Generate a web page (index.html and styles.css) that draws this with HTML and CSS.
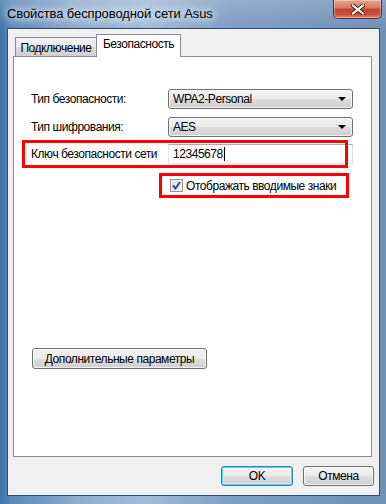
FILE: index.html
```html
<!DOCTYPE html>
<html lang="ru">
<head>
    <meta charset="UTF-8">
    <title>Свойства беспроводной сети Asus</title>
    <link rel="stylesheet" href="styles.css">
</head>
<body>
    <div class="window">
        <!-- Title bar -->
        <div class="titlebar">
            <span class="title">Свойства беспроводной сети Asus</span>
            <button class="close-btn" title="Закрыть">
                <svg width="14" height="11" viewBox="0 0 14 11">
                    <path d="M2 1.5 L12 9.5 M12 1.5 L2 9.5" stroke="#4a1a12" stroke-width="4" stroke-linecap="square"/>
                    <path d="M2 1.5 L12 9.5 M12 1.5 L2 9.5" stroke="#ffffff" stroke-width="2.2" stroke-linecap="square"/>
                </svg>
            </button>
        </div>

        <div class="client">
            <!-- Tabs -->
            <div class="tabs">
                <div class="tab">Подключение</div>
                <div class="tab active">Безопасность</div>
            </div>

            <div class="panel">
                <div class="row">
                    <label class="field-label">Тип безопасности:</label>
                    <div class="combo">WPA2-Personal<span class="arrow"></span></div>
                </div>
                <div class="row row-second">
                    <label class="field-label">Тип шифрования:</label>
                    <div class="combo">AES<span class="arrow"></span></div>
                </div>
                <div class="row row-key">
                    <label class="field-label">Ключ безопасности сети</label>
                    <div class="textbox">12345678<span class="caret"></span></div>
                </div>
                <div class="row row-check">
                    <span class="checkbox">
                        <svg width="9" height="9" viewBox="0 0 9 9">
                            <path d="M1 4.5 L3.5 7.5 L8 1" fill="none" stroke="#2b4f9e" stroke-width="2"/>
                        </svg>
                    </span>
                    <span class="check-label">Отображать вводимые знаки</span>
                </div>

                <button class="btn btn-advanced">Дополнительные параметры</button>

                <!-- annotation frames -->
                <div class="mark mark-key"></div>
                <div class="mark mark-check"></div>
            </div>

            <div class="footer">
                <button class="btn btn-ok">OK</button>
                <button class="btn btn-cancel">Отмена</button>
            </div>
        </div>
    </div>
</body>
</html>
```

FILE: styles.css
```css
/* Global */
* {
    box-sizing: border-box;
}

body {
    margin: 0;
    width: 386px;
    height: 504px;
    overflow: hidden;
    font-family: "Liberation Sans", Arial, sans-serif;
    font-size: 12px;
    letter-spacing: -0.45px;
    color: #000;
    white-space: nowrap;
}

/* Window frame */
.window {
    width: 386px;
    height: 504px;
    padding: 0 6px 8px 7px;
    display: flex;
    flex-direction: column;
    background:
        linear-gradient(180deg, rgba(255,255,255,0.18) 0, rgba(255,255,255,0) 28px),
        linear-gradient(90deg, #3f73ac 0, #5b88b8 3%, #8fadcd 20%, #a2bcd7 38%, #7d9dc2 60%, #7190b6 100%);
}

.titlebar {
    height: 28px;
    display: flex;
    align-items: flex-start;
    justify-content: space-between;
}

.title {
    margin-top: 6px;
    font-size: 13px;
    letter-spacing: -0.1px;
    line-height: 16px;
    text-shadow: 0 0 6px #e6eef7, 0 0 10px #e6eef7, 0 0 14px rgba(230,238,247,0.8);
}

.close-btn {
    width: 49px;
    height: 19px;
    margin-right: -2px;
    padding: 0;
    display: flex;
    align-items: center;
    justify-content: center;
    border: 1px solid #5b2a24;
    border-top: none;
    border-radius: 0 0 5px 5px;
    background: linear-gradient(180deg, #e8a493 0, #d7765f 45%, #c2422a 50%, #c8503a 80%, #e08a6a 100%);
    box-shadow: inset 0 0 0 1px rgba(255,255,255,0.35);
}

/* Client area */
.client {
    flex: 1;
    background: #f0f0f0;
    border: 1px solid #2f4c72;
    padding: 5px 5px 0 5px;
    display: flex;
    flex-direction: column;
}

.tabs {
    display: flex;
    align-items: flex-end;
    height: 22px;
    padding-left: 2px;
}

.tab {
    height: 19px;
    width: 82px;
    text-align: center;
    line-height: 20px;
    border: 1px solid #898c95;
    border-bottom: none;
    background: linear-gradient(180deg, #f3f3f3 0, #ebebeb 50%, #dddddd 51%, #cfcfcf 100%);
}

.tab.active {
    height: 23px;
    width: 85px;
    margin-left: -1px;
    margin-bottom: -1px;
    line-height: 19px;
    background: #fff;
    position: relative;
    z-index: 1;
}

.panel {
    position: relative;
    width: 359px;
    height: 401px;
    background: #fff;
    border: 1px solid #898c95;
    padding: 32px 0 0 17px;
}

.row {
    display: flex;
    align-items: center;
    height: 20px;
}

.row-second {
    margin-top: 8px;
}

.row-key {
    margin-top: 7px;
}

.row-check {
    margin-top: 14px;
    padding-left: 139px;
    height: 15px;
}

.field-label {
    width: 137px;
    flex: none;
}

.combo {
    position: relative;
    width: 185px;
    height: 20px;
    padding-left: 4px;
    line-height: 18px;
    border: 1px solid #707070;
    border-radius: 3px;
    background: linear-gradient(180deg, #f2f2f2 0, #ebebeb 50%, #dddddd 51%, #cfcfcf 100%);
    box-shadow: inset 0 0 0 1px rgba(255,255,255,0.7);
}

.arrow {
    position: absolute;
    right: 6px;
    top: 7px;
    border-left: 4px solid transparent;
    border-right: 4px solid transparent;
    border-top: 4px solid #000;
}

.textbox {
    width: 185px;
    height: 20px;
    padding-left: 4px;
    line-height: 18px;
    border: 1px solid #abadb3;
    border-left-color: #e2e3ea;
    border-right-color: #dbdfe6;
    border-bottom-color: #e3e9ef;
    background: #fff;
    display: flex;
    align-items: center;
}

.caret {
    display: inline-block;
    width: 1px;
    height: 14px;
    margin-left: 1px;
    background: #000;
}

.checkbox {
    width: 13px;
    height: 13px;
    border: 1px solid #8e8f8f;
    background: linear-gradient(135deg, #dcdcdc 0, #f6f6f6 100%);
    display: flex;
    align-items: center;
    justify-content: center;
    box-shadow: inset 0 0 0 1px #f4f4f4;
}

.check-label {
    margin-left: 3px;
}

/* Buttons */
.btn {
    font-family: inherit;
    font-size: 12px;
    letter-spacing: -0.45px;
    color: #000;
    height: 21px;
    padding: 0;
    border: 1px solid #707070;
    border-radius: 3px;
    background: linear-gradient(180deg, #f2f2f2 0, #ebebeb 50%, #dddddd 51%, #cfcfcf 100%);
    box-shadow: inset 0 0 0 1px rgba(255,255,255,0.7);
}

.btn-advanced {
    display: block;
    width: 175px;
    margin-top: 155px;
    margin-left: 1px;
}

.footer {
    display: flex;
    justify-content: flex-end;
    gap: 10px;
    padding: 9px 0 0 0;
}

.btn-ok {
    width: 72px;
    height: 20px;
    border-color: #3c7fb1;
    box-shadow: inset 0 0 0 1px #48d5fd, inset 0 0 0 2px rgba(255,255,255,0.4);
}

.btn-cancel {
    width: 71px;
    height: 20px;
}

/* Red annotation frames */
.mark {
    position: absolute;
    border: 3px solid #ff0000;
}

.mark-key {
    left: 8px;
    top: 83px;
    width: 326px;
    height: 28px;
}

.mark-check {
    left: 145px;
    top: 116px;
    width: 190px;
    height: 25px;
}
```
